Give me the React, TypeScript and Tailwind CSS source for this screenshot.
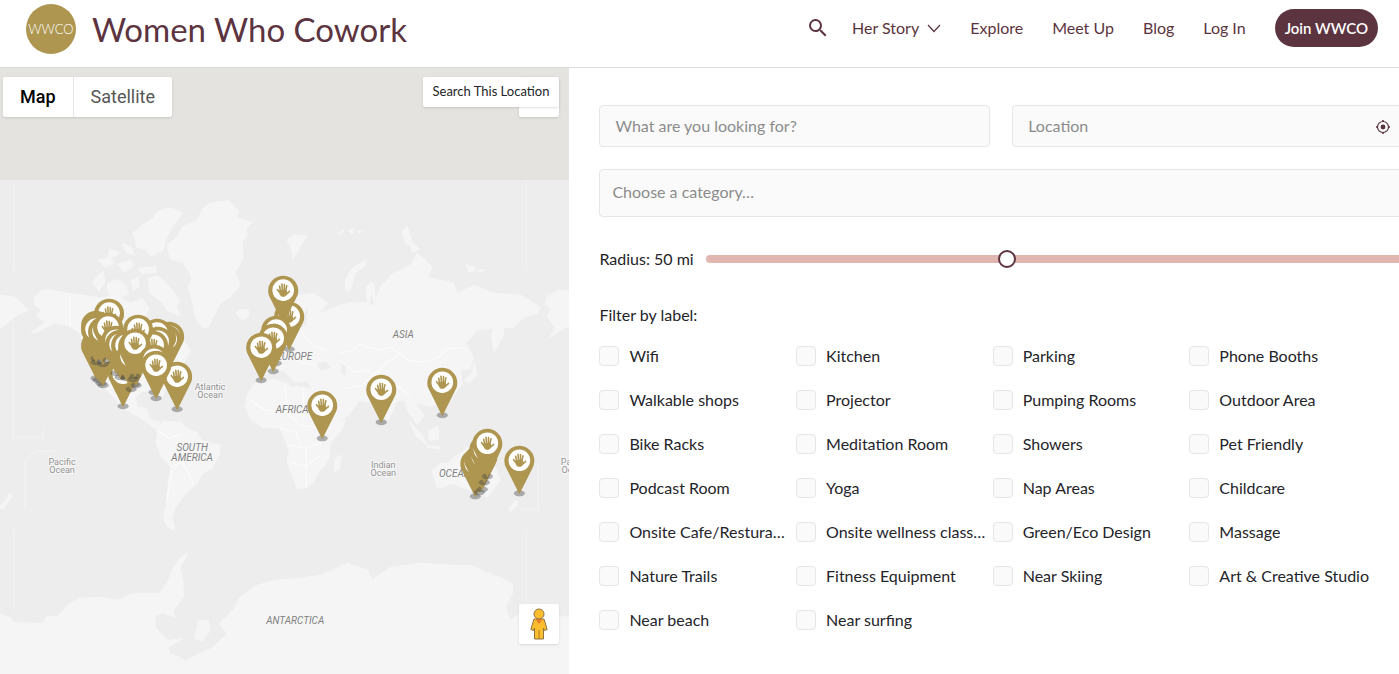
import { MdSearch } from "react-icons/md";

const navLinks = ["Explore", "Meet Up", "Blog", "Log In"];

const labels = [
  "Wifi", "Kitchen", "Parking", "Phone Booths",
  "Walkable shops", "Projector", "Pumping Rooms", "Outdoor Area",
  "Bike Racks", "Meditation Room", "Showers", "Pet Friendly",
  "Podcast Room", "Yoga", "Nap Areas", "Childcare",
  "Onsite Cafe/Restura…", "Onsite wellness class…", "Green/Eco Design", "Massage",
  "Nature Trails", "Fitness Equipment", "Near Skiing", "Art & Creative Studio",
  "Near beach", "Near surfing",
];

// Centre of each pin's head, listed from back to front.
const pins: [number, number][] = [
  [123, 373], [96, 345], [98, 347], [101, 350], [103, 352], [109, 313],
  [96, 325], [99, 327], [96, 329], [103, 331], [108, 327],
  [169, 336], [166, 339], [161, 337], [157, 333], [158, 341], [153, 345],
  [116, 340], [134, 351], [120, 344], [126, 345],
  [138, 329], [131, 356], [136, 352], [133, 346], [135, 343],
  [177, 376], [154, 359], [156, 365],
  [289, 316], [283, 290], [276, 330], [273, 338], [261, 347],
  [322, 405], [381, 389], [442, 382],
  [475, 463], [479, 459], [482, 456], [484, 449], [487, 443], [519, 460],
];

const land = [
  // Greenland
  "M202 210L208 204L217 202L229 201L233 205L238 211L237 218L252 222L246 229L247 235L242 242L243 257L235 273L240 285L230 297L220 303L213 317L208 327L202 327L195 317L193 303L188 287L192 277L183 263L170 258L167 245L177 237L182 227L197 220Z",
  // Ellesmere and the northern islands
  "M183 213L176 210L170 208L157 212L153 218L147 222L133 233L137 247L147 250L150 256L163 250L165 241L173 225Z",
  "M122 243L131 247L135 255L127 253ZM110 249L119 252L116 256L108 256ZM98 260L110 257L114 263L105 267ZM118 264L130 260L134 266L124 272ZM138 268L156 266L156 272L142 273ZM103 271L96 277L93 284L99 290L105 282ZM107 284L117 279L126 286L128 294L116 299L109 294ZM131 280L138 277L139 287L133 290Z",
  // Baffin
  "M148 278L157 276L163 280L172 290L180 301L176 306L180 315L168 311L162 302L150 293Z",
  // North America
  "M35 297L41 291L48 289L68 293L85 295L100 298L115 295L130 303L142 298L149 308L144 319L151 328L158 335L163 322L171 322L180 335L190 350L184 362L176 373L167 383L162 397L155 390L142 391L135 397L137 407L146 408L149 418L159 422L165 431L153 427L140 417L123 408L114 397L106 389L94 377L87 360L84 344L80 333L70 326L55 323L39 331L31 333L45 322L36 315L42 310L34 304Z",
  // South America
  "M163 421L180 422L188 429L197 432L201 440L220 445L219 454L212 468L202 473L197 483L190 489L182 498L175 507L172 517L175 530L168 527L163 517L167 503L168 483L171 467L162 457L156 443L158 430Z",
  // Africa
  "M247 395L255 383L272 379L285 380L290 387L300 386L312 390L320 400L328 415L335 422L345 420L341 430L330 443L329 456L325 465L318 472L313 482L305 488L297 488L292 475L287 462L289 450L285 440L280 428L262 427L250 418L245 407ZM335 458L341 455L339 469L334 472Z",
  // Europe and Asia
  "M260 373L258 362L270 360L266 350L278 342L285 335L280 325L278 315L288 300L300 295L313 293L327 303L320 313L333 308L350 302L367 302L366 288L370 282L374 283L375 303L380 287L393 273L410 265L417 253L432 267L427 277L453 283L457 293L473 285L493 293L520 295L540 307L537 313L523 317L513 327L503 327L503 335L494 352L491 337L493 328L477 330L465 343L473 357L470 368L460 370L462 383L450 400L430 406L414 402L424 415L417 424L408 412L405 400L397 400L388 420L380 415L372 402L357 400L343 390L358 402L348 415L335 423L322 405L310 388L308 380L295 382L283 370L275 370L265 376Z",
  // Siberia and Alaska across the date line
  "M569 291L558 290L547 296L545 304L551 309L547 316L555 327L550 337L569 325ZM0 295L15 297L28 310L20 313L13 318L5 325L0 328Z",
  // Islands
  "M236 313L240 309L248 310L249 315L242 320ZM259 333L265 329L267 344L259 346ZM287 240L294 235L307 236L303 241L298 250L293 259L291 248ZM346 290L345 280L352 268L365 260L366 264L355 273L350 290ZM402 231L407 226L409 233L411 241L419 249L412 252L410 245L405 243ZM338 234L344 229L341 234ZM348 230L354 229L352 234ZM357 231L362 231L358 233ZM466 265L475 267L472 272L468 271ZM478 269L484 270L479 272ZM472 373L474 363L477 374L469 383L464 380ZM409 421L421 434L426 444L416 436ZM428 430L438 426L438 439L429 440ZM427 445L440 447L440 449L427 447ZM480 438L493 440L502 449L488 446ZM508 509L516 500L517 504L511 511ZM0 507L10 493L12 496L3 509Z",
  // Australia
  "M432 470L441 463L447 463L460 453L467 447L477 449L482 454L486 442L493 463L500 480L487 497L470 490L453 483L437 488Z",
  // Antarctica
  "M0 613L10 617L13 622L43 623L47 615L57 617L67 605L80 598L100 597L117 600L133 593L160 593L167 583L172 570L180 558L188 553L180 567L183 583L183 597L173 610L175 617L163 613L155 615L155 627L167 640L183 638L168 647L170 653L185 660L200 653L213 647L227 633L220 623L233 610L240 597L257 585L275 580L300 578L320 575L347 563L367 570L372 580L390 567L420 563L453 565L470 565L487 572L512 583L512 593L505 607L510 620L520 613L569 617V674H0ZM194 638L199 620L208 620L210 630L202 641Z",
];

const borders =
  "M70 296V327M156 430L170 438L180 434M171 467L182 462L188 472L194 486M166 503L172 470M250 400L265 410L285 412L300 425L318 428M285 387L287 412M303 388V420M287 445L306 448L322 442M290 462L305 466L320 455M306 448V486M280 428L296 432L300 445M340 353L352 350L360 344L372 348L380 350L390 347L400 354L408 360L424 362L440 356L446 349L462 347M340 360L346 366L355 372L366 370L376 374L388 361L400 354M345 388L362 385L375 372L384 382L400 388L410 396M300 330L306 338L312 345L325 350M288 350L300 362L318 365";

const waterLines =
  "M14 181V271M14 528V612M526 181V271M526 528V610M13 300V437H43V427M25 460V509M25 460L35 451H55M538 463V509H520";

const smallLabels: [string, number, number][] = [
  ["Atlantic", 210, 390], ["Ocean", 210, 398],
  ["Pacific", 62, 465], ["Ocean", 62, 473],
  ["Indian", 383, 468], ["Ocean", 383, 476],
  ["Pacific", 574, 465], ["Ocean", 574, 473],
];

const regionLabels: [string, number, number][] = [
  ["ASIA", 403, 338], ["EUROPE", 294, 360], ["AFRICA", 292, 413],
  ["SOUTH", 192, 451], ["AMERICA", 192, 461], ["OCEANIA", 459, 477],
  ["ANTARCTICA", 295, 624],
];

function Pin({ x, y }: { x: number; y: number }) {
  return (
    <g transform={`translate(${x} ${y})`}>
      <ellipse cx="0" cy="33" rx="5.5" ry="3" fill="#444" fillOpacity=".4" />
      <path d="M0 34L-12.8 8.4A15 15 0 1 1 12.8 8.4Z" fill="#ae9650" />
      <circle r="10.8" fill="#fff" />
      <path
        d="M-2.8 1L-3.6 -4M-.9 0L-1.3 -6M1 0L1.2 -5.6M2.4 1L3.6 -4.4M-3.2 2.8L-5.8 -.6M2.6 4.4L6.3 1.2"
        stroke="#ae9650" strokeWidth="1.6" strokeLinecap="round" fill="none"
      />
      <path d="M-3.6 -.2H3.2L4.2 2.8L2.9 5.2L1.4 6.6H-1.6L-3.4 4.6Z" fill="#ae9650" />
    </g>
  );
}

function WorldMap() {
  return (
    <svg
      className="block h-full w-full"
      viewBox="0 68 569 606"
      preserveAspectRatio="xMinYMin slice"
      role="img"
      aria-label="Map of coworking spaces"
    >
      <rect y="68" width="569" height="606" fill="#ededed" />
      <rect y="68" width="569" height="112" fill="#e4e3df" />
      <path d={waterLines} fill="none" stroke="#f3f3f3" strokeWidth="1" />
      <g fill="#f5f5f5" stroke="#f5f5f5" strokeLinejoin="round">
        {land.map((d) => <path key={d} d={d} />)}
      </g>
      <path d="M316 364L326 361L331 368L320 370ZM341 361L346 365L345 375L341 373ZM262 375L280 372L291 382L308 383L305 387L291 385L276 379Z" fill="#ededed" />
      <path d="M371 291L374 305L370 304ZM300 318L308 308L306 325L296 329Z" fill="#ededed" />
      <path d={borders} fill="none" stroke="#fcfcfc" strokeWidth="1" strokeLinejoin="round" />
      <g className="font-['Roboto',sans-serif]" textAnchor="middle" stroke="#f7f7f7" strokeWidth="2" paintOrder="stroke">
        <g fontSize="9" fill="#929292">
          {smallLabels.map(([t, x, y]) => <text key={`${t}${x}${y}`} x={x} y={y}>{t}</text>)}
        </g>
        <g fontSize="10" fontStyle="italic" fill="#808080">
          {regionLabels.map(([t, x, y]) => <text key={t} x={x} y={y}>{t}</text>)}
        </g>
      </g>
      {pins.map(([x, y]) => <Pin key={`${x}-${y}`} x={x} y={y} />)}
    </svg>
  );
}

function Pegman() {
  return (
    <svg className="h-8 w-5" viewBox="0 0 20 32" aria-hidden="true">
      <path d="M5 11H15L18.2 21.5L15.5 22.5L14.5 20V31H5.5V20L4.5 22.5L1.8 21.5Z" fill="#fbbc2e" stroke="#8d7443" strokeLinejoin="round" />
      <path d="M6 11H14L10 16Z" fill="#e8812b" />
      <path d="M10 22V31" stroke="#b17d22" />
      <circle cx="10" cy="6" r="5" fill="#fbbc2e" stroke="#8d7443" />
    </svg>
  );
}

function Header() {
  return (
    <header className="relative z-10 flex h-[68px] items-start justify-between border-b border-[#d9dcdc] bg-white pr-[21px] pl-[26px] text-[#5c3440]">
      <a href="#home" className="flex items-center gap-4 pt-1">
        <span className="flex size-[50px] items-center justify-center rounded-full bg-[#ae9650] text-[13px] leading-none font-light text-white">
          WWCO
        </span>
        <span className="text-[33px] leading-[50px]">Women Who Cowork</span>
      </a>
      <nav className="flex items-center gap-[29px] pt-[9px] text-[16px] whitespace-nowrap">
        <div className="flex items-center gap-[22px]">
          <button type="button" aria-label="Search"><MdSearch className="size-6" /></button>
          <a href="#story" className="flex items-center gap-2">
            Her Story
            <svg className="h-4 w-[14px]" viewBox="0 0 14 16" fill="none" stroke="currentColor" strokeWidth="1.2" aria-hidden="true">
              <path d="M1 5L7 11.5L13 5" />
            </svg>
          </a>
        </div>
        {navLinks.map((l) => <a key={l} href="#nav">{l}</a>)}
        <a href="#join" className="flex h-[38px] items-center rounded-full bg-[#5c3440] px-[10px] text-[15px] font-semibold text-white">
          Join WWCO
        </a>
      </nav>
    </header>
  );
}

export default function App() {
  return (
    <div className="flex min-h-screen flex-col overflow-hidden bg-white font-['Lato',sans-serif]">
      <Header />
      <main className="flex flex-1">
        <section className="relative w-[40.7%] overflow-hidden bg-[#ededed]">
          <div className="absolute inset-0"><WorldMap /></div>
          <div className="absolute top-[9px] left-[3px] flex h-10 overflow-hidden rounded-xs bg-white font-['Roboto',sans-serif] text-[18px] shadow">
            <button type="button" className="border-r border-[#e6e6e6] px-[17px] pb-[2px] font-medium text-black">Map</button>
            <button type="button" className="px-[17px] pb-[2px] text-[#565656]">Satellite</button>
          </div>
          <div className="absolute top-[9px] right-[10px] size-10 rounded-xs bg-white shadow" />
          <button type="button" className="absolute top-[9px] right-[10px] h-[30px] rounded-xs bg-white px-[10px] text-[13px] whitespace-nowrap text-[#242429] shadow">
            Search This Location
          </button>
          <button type="button" aria-label="Street view" className="absolute right-[10px] bottom-[30px] flex size-10 items-center justify-center rounded-xs bg-white shadow">
            <Pegman />
          </button>
        </section>

        <section className="min-w-0 flex-1 overflow-hidden pl-[30px] text-[16px] text-[#242429]">
          <form className="-mr-1 pt-[37px] pb-8">
            <div className="grid grid-cols-2 gap-[22px]">
              <input
                aria-label="What are you looking for?"
                placeholder="What are you looking for?"
                className="h-[42px] min-w-0 rounded border border-[#e6e6e6] bg-[#fafafa] px-[15px] pb-[2px] placeholder:text-[#8c8c8c]"
              />
              <div className="relative">
                <input
                  aria-label="Location"
                  placeholder="Location"
                  className="h-[42px] w-full rounded border border-[#e6e6e6] bg-[#fafafa] pr-9 pb-[2px] pl-[15px] placeholder:text-[#8c8c8c]"
                />
                <button type="button" aria-label="Use my location" className="absolute top-[15px] right-[13px] text-[#5c3440]">
                  <svg className="block size-[14px]" viewBox="0 0 14 14" fill="none" stroke="currentColor">
                    <circle cx="7" cy="7" r="5.5" strokeWidth="1.2" />
                    <path d="M7 0V2M7 12V14M0 7H2M12 7H14" strokeWidth="1.6" />
                    <circle cx="7" cy="7" r="2.4" fill="currentColor" stroke="none" />
                  </svg>
                </button>
              </div>
            </div>

            <select
              aria-label="Category"
              className="mt-[22px] block h-12 w-full appearance-none rounded border border-[#e6e6e6] bg-[#fafafa] px-3 pb-[2px] text-[#8c8c8c]"
            >
              <option>Choose a category…</option>
            </select>

            <div className="mt-[30px] flex h-6 items-center gap-3">
              <label htmlFor="radius" className="whitespace-nowrap">Radius: 50 mi</label>
              <input
                id="radius"
                type="range"
                min="0"
                max="116"
                defaultValue="50"
                className="h-2 min-w-0 flex-1 appearance-none rounded-full bg-[#e2b6b0] [&::-webkit-slider-thumb]:size-[18px] [&::-webkit-slider-thumb]:appearance-none [&::-webkit-slider-thumb]:rounded-full [&::-webkit-slider-thumb]:border-2 [&::-webkit-slider-thumb]:border-[#5c3440] [&::-webkit-slider-thumb]:bg-white"
              />
            </div>

            <fieldset className="mt-8">
              <legend className="h-6 leading-6">Filter by label:</legend>
              <div className="mt-[17px] mr-[17px] grid grid-cols-4 gap-y-5">
                {labels.map((l) => (
                  <label key={l} className="flex h-6 items-center gap-[10px]">
                    <input type="checkbox" className="size-5 shrink-0 appearance-none rounded border border-[#e6e6e6] bg-[#fafafa] checked:bg-[#5c3440]" />
                    <span className="truncate">{l}</span>
                  </label>
                ))}
              </div>
            </fieldset>
          </form>
        </section>
      </main>
    </div>
  );
}
